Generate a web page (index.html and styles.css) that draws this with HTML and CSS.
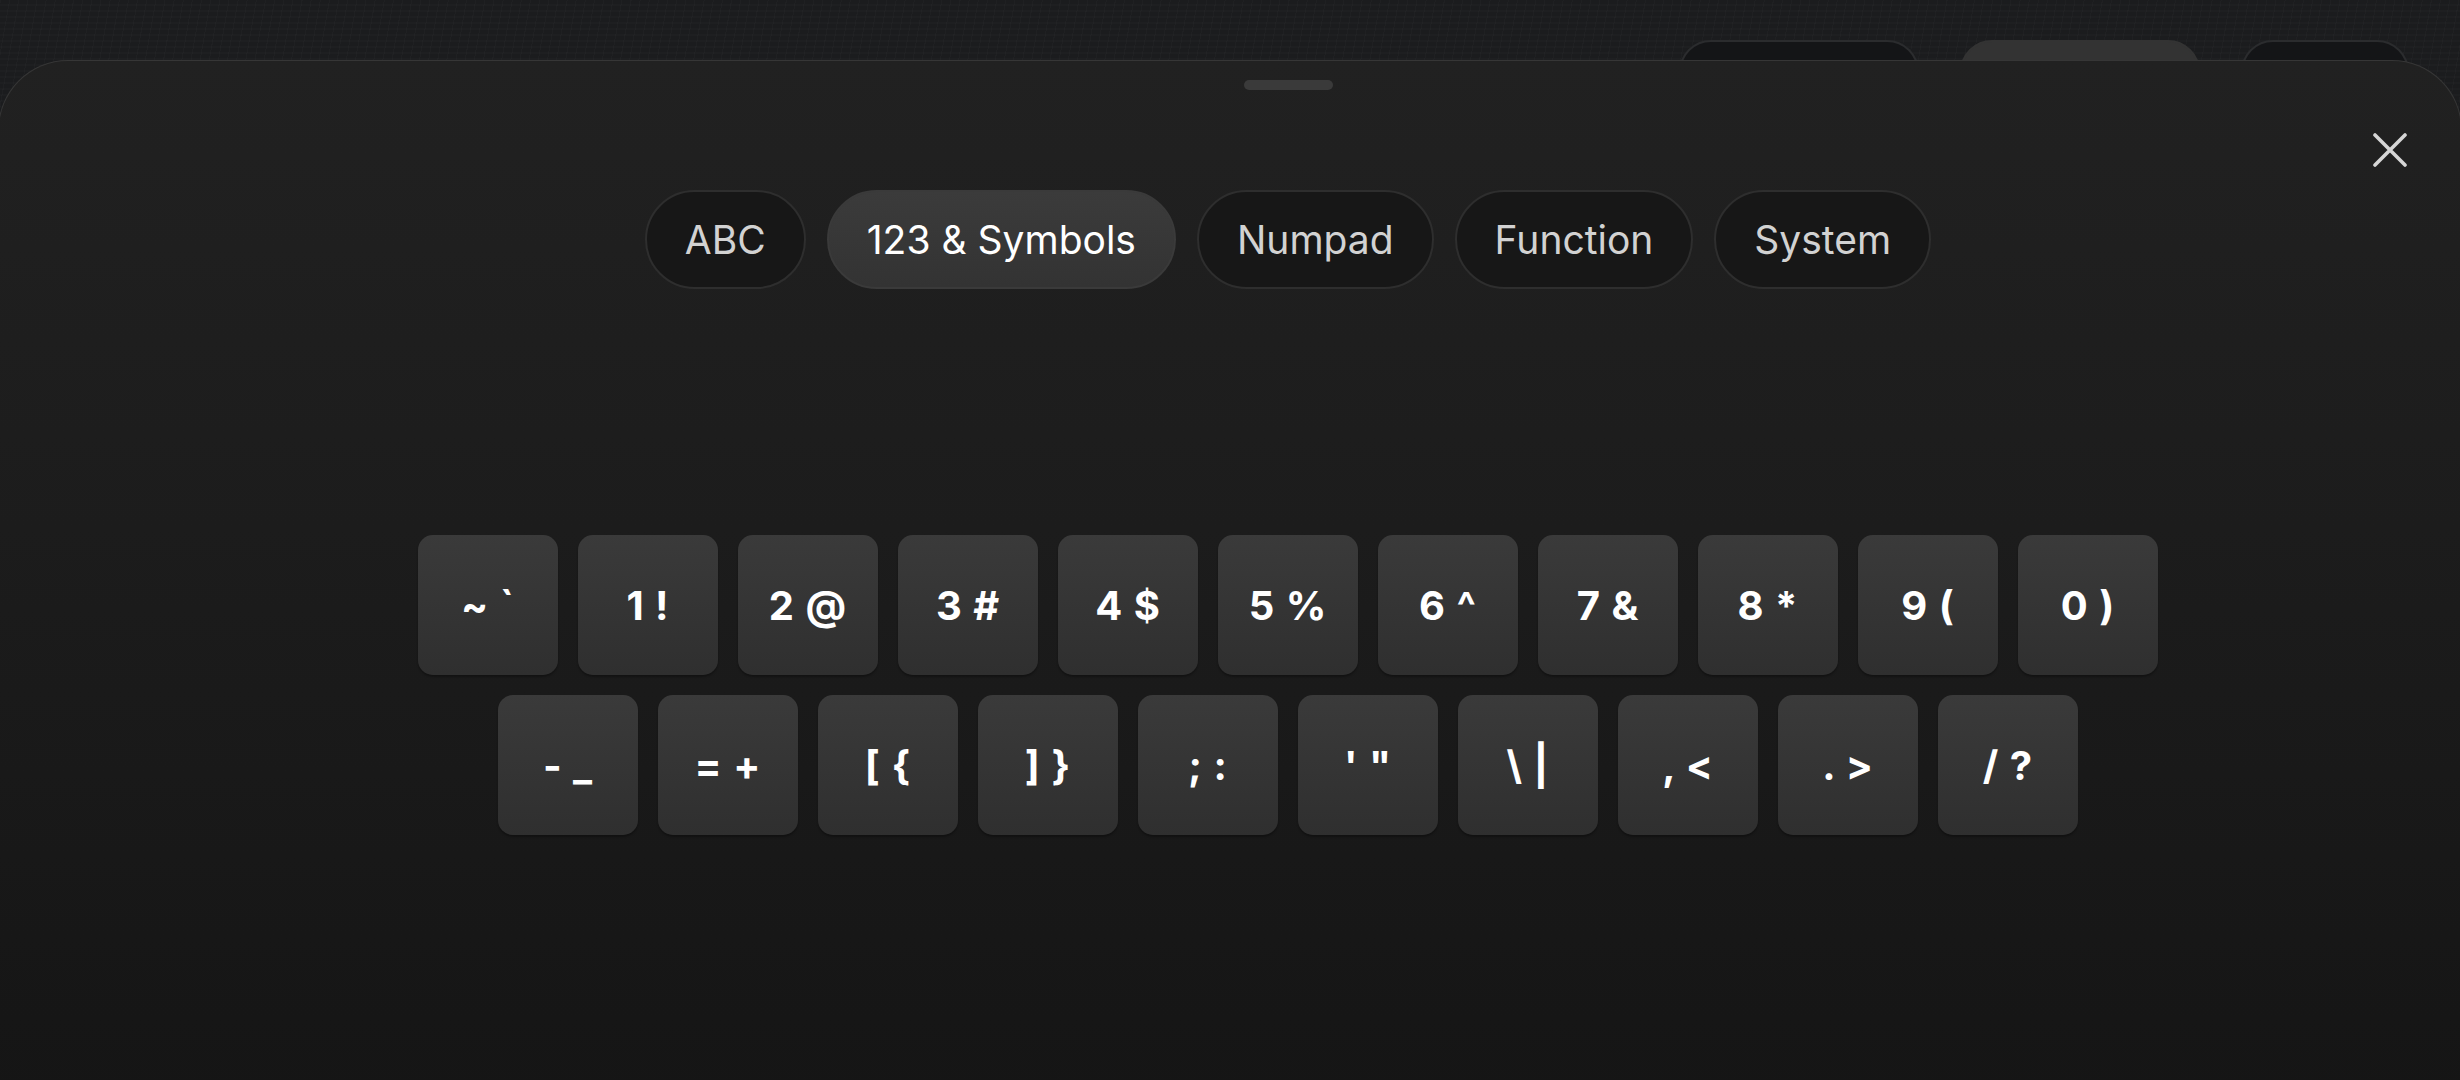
FILE: index.html
```html
<!DOCTYPE html>
<html lang="en">
<head>
  <meta charset="UTF-8">
  <meta name="viewport" content="width=device-width, initial-scale=1.0">
  <title>Keyboard</title>
  <link rel="stylesheet" href="styles.css">
</head>
<body>

  <!-- toolbar behind the sheet -->
  <div class="toolbar">
    <span class="toolbar-pill"></span>
    <span class="toolbar-pill active"></span>
    <span class="toolbar-pill small"></span>
  </div>

  <div class="sheet">
    <button class="close-btn" aria-label="Close">
      <svg width="34" height="34" viewBox="0 0 34 34">
        <path d="M2 2 L32 32 M32 2 L2 32" stroke="#d6d6d6" stroke-width="3.6" stroke-linecap="round" fill="none"/>
      </svg>
    </button>

    <div class="sheet-body">
      <div class="handle"></div>

      <div class="tabs">
        <button class="tab">ABC</button>
        <button class="tab active">123 &amp; Symbols</button>
        <button class="tab">Numpad</button>
        <button class="tab">Function</button>
        <button class="tab">System</button>
      </div>

      <div class="keys">
        <div class="key-row">
          <button class="key">~ `</button>
          <button class="key">1 !</button>
          <button class="key">2 @</button>
          <button class="key">3 #</button>
          <button class="key">4 $</button>
          <button class="key">5 %</button>
          <button class="key">6 ^</button>
          <button class="key">7 &amp;</button>
          <button class="key">8 *</button>
          <button class="key">9 (</button>
          <button class="key">0 )</button>
        </div>
        <div class="key-row">
          <button class="key">- _</button>
          <button class="key">= +</button>
          <button class="key">[ {</button>
          <button class="key">] }</button>
          <button class="key">; :</button>
          <button class="key">' "</button>
          <button class="key">\ |</button>
          <button class="key">, &lt;</button>
          <button class="key">. &gt;</button>
          <button class="key">/ ?</button>
        </div>
      </div>
    </div>
  </div>

</body>
</html>
```

FILE: styles.css
```css
* {
  box-sizing: border-box;
}

body {
  margin: 0;
  height: 1080px;
  overflow: hidden;
  font-family: Inter, "Liberation Sans", sans-serif;
  background-color: #1b1c1e;
  background-image:
    repeating-linear-gradient(0deg, rgba(255, 255, 255, 0.012) 0 2px, transparent 2px 6px),
    repeating-linear-gradient(100deg, rgba(255, 255, 255, 0.015) 0 1px, transparent 1px 9px);
}

button {
  font-family: inherit;
  border: none;
  cursor: pointer;
}

/* top toolbar, mostly covered by the sheet */
.toolbar {
  display: flex;
  justify-content: flex-end;
  gap: 41px;
  padding: 40px 51px 0 0;
}

.toolbar-pill {
  width: 240px;
  height: 64px;
  border-radius: 32px;
  background: #141517;
  border: 2px solid #2b2c2e;
}

.toolbar-pill.active {
  background: #333333;
  border-color: #333333;
}

.toolbar-pill.small {
  width: 168px;
}

/* bottom sheet */
.sheet {
  position: absolute;
  top: 60px;
  left: -2px;
  right: -2px;
  height: 1040px;
  border-radius: 70px 70px 0 0;
  border: 1px solid #363636;
  border-bottom: none;
  background: linear-gradient(180deg, #212121 0%, #1c1c1c 45%, #151515 100%);
}

.sheet-body {
  display: flex;
  flex-direction: column;
  align-items: center;
  padding-left: 116px;
}

.handle {
  width: 89px;
  height: 10px;
  margin-top: 19px;
  border-radius: 5px;
  background: #3a3a3a;
}

.close-btn {
  position: absolute;
  top: 72px;
  right: 54px;
  padding: 0;
  background: none;
  line-height: 0;
}

/* tab switcher */
.tabs {
  display: flex;
  gap: 21px;
  margin-top: 100px;
}

.tab {
  height: 99px;
  padding: 0 38px;
  border-radius: 50px;
  border: 2px solid #2e2e2e;
  background: #171717;
  color: #d2d2d2;
  font-size: 39px;
  font-weight: 400;
}

.tab.active {
  border-color: #3a3a3a;
  background: linear-gradient(180deg, #3b3b3b, #333333);
  color: #ffffff;
}

/* keys */
.keys {
  display: flex;
  flex-direction: column;
  align-items: center;
  gap: 20px;
  margin-top: 246px;
}

.key-row {
  display: flex;
  gap: 20px;
}

.key {
  width: 140px;
  height: 140px;
  border-radius: 15px;
  background: linear-gradient(180deg, #3a3a3a, #2f2f2f);
  box-shadow: 0 2px 2px rgba(0, 0, 0, 0.3);
  color: #ffffff;
  font-size: 40px;
  font-weight: 700;
  letter-spacing: 1px;
  white-space: pre;
}
```
